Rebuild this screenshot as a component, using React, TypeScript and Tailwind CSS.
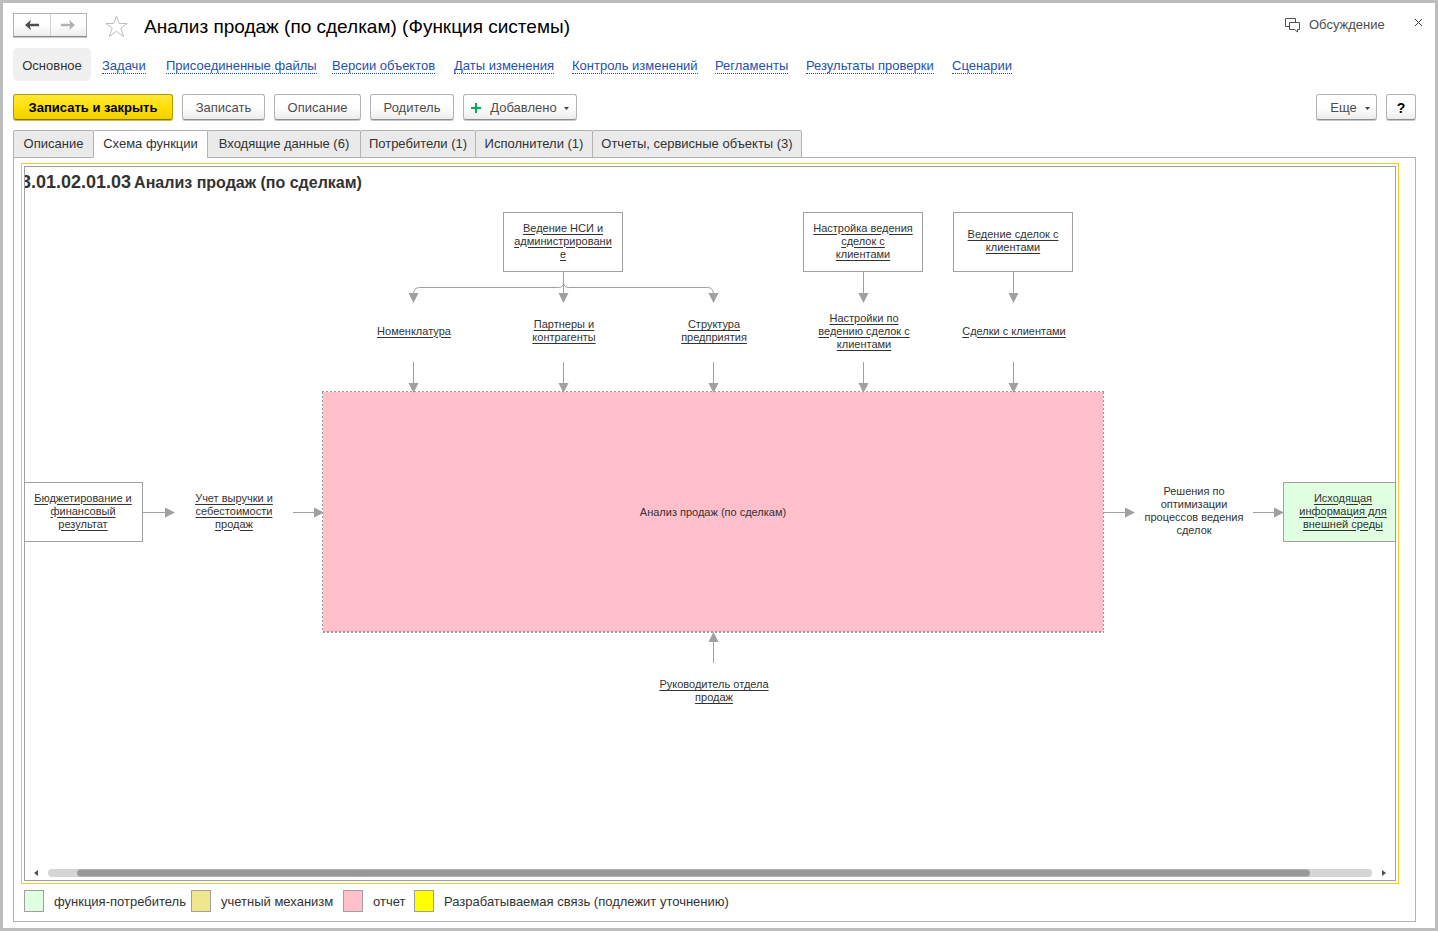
import type { ReactNode } from "react";

const links = [
  { label: "Задачи", width: "w-[44px]" },
  { label: "Присоединенные файлы", width: "w-[146px]" },
  { label: "Версии объектов", width: "w-[102px]" },
  { label: "Даты изменения", width: "w-[98px]" },
  { label: "Контроль изменений", width: "w-[123px]" },
  { label: "Регламенты", width: "w-[71px]" },
  { label: "Результаты проверки", width: "w-[126px]" },
  { label: "Сценарии", width: "w-[58px]" },
];

const tabs = [
  { label: "Описание", width: "w-[81px]" },
  { label: "Схема функции", width: "w-[115px]" },
  { label: "Входящие данные (6)", width: "w-[154px]" },
  { label: "Потребители (1)", width: "w-[116px]" },
  { label: "Исполнители (1)", width: "w-[118px]" },
  { label: "Отчеты, сервисные объекты (3)", width: "w-[210px]" },
];

const legend = [
  { label: "функция-потребитель", color: "bg-[#e0ffe0]", width: "w-[127px]" },
  { label: "учетный механизм", color: "bg-[#f0e68c]", width: "w-[112px]" },
  { label: "отчет", color: "bg-[#ffc0cb]", width: "w-[31px]" },
  { label: "Разрабатываемая связь (подлежит уточнению)", color: "bg-[#ffff00]", width: "w-[284px]" },
];

type DiagramNode = { lines: string[]; place: string; link?: boolean };

const box = "border border-[#a0a0a0] bg-white";

const nodes: DiagramNode[] = [
  { lines: ["Ведение НСИ и", "администрировани", "е"], place: `left-[478px] top-[45px] ${box}` },
  { lines: ["Настройка ведения", "сделок с", "клиентами"], place: `left-[778px] top-[45px] ${box}` },
  { lines: ["Ведение сделок с", "клиентами"], place: `left-[928px] top-[45px] ${box}` },
  { lines: ["Номенклатура"], place: "left-[329px] top-[135px]" },
  { lines: ["Партнеры и", "контрагенты"], place: "left-[479px] top-[135px]" },
  { lines: ["Структура", "предприятия"], place: "left-[629px] top-[135px]" },
  { lines: ["Настройки по", "ведению сделок с", "клиентами"], place: "left-[779px] top-[135px]" },
  { lines: ["Сделки с клиентами"], place: "left-[929px] top-[135px]" },
  { lines: ["Бюджетирование и", "финансовый", "результат"], place: `left-[-2px] top-[315px] ${box}` },
  { lines: ["Учет выручки и", "себестоимости", "продаж"], place: "left-[149px] top-[315px]" },
  { lines: ["Решения по", "оптимизации", "процессов ведения", "сделок"], place: "left-[1109px] top-[315px]", link: false },
  { lines: ["Исходящая", "информация для", "внешней среды"], place: "left-[1258px] top-[315px] border border-[#a0a0a0] bg-[#e0ffe0]" },
  { lines: ["Руководитель отдела", "продаж"], place: "left-[629px] top-[495px]" },
];

function Lines({ lines }: { lines: string[] }) {
  return (
    <>
      {lines.map((line) => (
        <span key={line} className="block whitespace-nowrap">
          {line}
        </span>
      ))}
    </>
  );
}

function Node({ lines, place, link = true }: DiagramNode) {
  const base = "absolute flex h-[60px] w-[120px] flex-col items-center justify-center pb-[2px] text-center";
  return link ? (
    <a href="#" className={`${base} underline underline-offset-2 ${place}`}>
      <Lines lines={lines} />
    </a>
  ) : (
    <div className={`${base} ${place}`}>
      <Lines lines={lines} />
    </div>
  );
}

function Connectors() {
  const inputs = [388.5, 538.5, 688.5, 838.5, 988.5];
  const down = (x: number, y: number) => `M${x - 5} ${y - 9}h10l-5 10z`;
  const right = (x: number, y: number) => `M${x - 9} ${y - 5}v10l10 -5z`;
  return (
    <svg className="absolute left-0 top-0 h-[600px] w-[1400px]" viewBox="0 0 1400 600" aria-hidden="true">
      <g fill="none" stroke="#999" strokeDasharray="2 2">
        <path d="M297 224.500H1079M297.500 225V464M1078.500 225V464" />
        <path d="M298 465H1079" strokeWidth="2" />
      </g>
      <g fill="none" stroke="#a0a0a0">
        <path d="M538.500 105V128M538.500 115Q538.500 120.500 533.500 120.500H394.500Q388.500 120.500 388.500 128M538.500 115Q538.500 120.500 543.500 120.500H682.500Q688.500 120.500 688.500 128" />
        <path d="M838.500 105V128M988.500 105V128" />
        {inputs.map((x) => (
          <path key={x} d={`M${x} 195V218`} />
        ))}
        <path d="M118 345.500H142M268 345.500H292M1079 345.500H1102M1228 345.500H1252M688.500 473V496" />
      </g>
      <g fill="#a0a0a0">
        {inputs.map((x) => (
          <path key={x} d={down(x, 135) + down(x, 225)} />
        ))}
        <path d={right(149, 345.5) + right(298, 345.5) + right(1109, 345.5) + right(1258, 345.5)} />
        <path d="M683.500 475h10l-5 -10z" />
      </g>
    </svg>
  );
}

function Button({ children, width, label }: { children: ReactNode; width: string; label?: string }) {
  return (
    <button
      type="button"
      aria-label={label}
      className={`flex h-[26px] shrink-0 items-center justify-center whitespace-nowrap rounded-[3px] border border-[#b3b3b3] border-b-[#8c8c8c] bg-linear-to-b from-white from-50% to-[#ececec] pt-[2px] text-[#4d4d4d] shadow-[0_1px_0_#c8c8c8] ${width}`}
    >
      {children}
    </button>
  );
}

function Caret() {
  return (
    <svg className="h-[3px] w-[5px]" viewBox="0 0 5 3" aria-hidden="true">
      <path d="M0 0h5L2.500 3z" fill="#404040" />
    </svg>
  );
}

function Arrow({ back }: { back?: boolean }) {
  return (
    <svg className="h-3 w-[14px]" viewBox="0 0 14 12" aria-hidden="true">
      <path
        d={back ? "M0 6L6 0.800L4.800 4.800H14V7.200H4.800L6 11.200z" : "M14 6L8 0.800L9.200 4.800H0V7.200H9.200L8 11.200z"}
        fill={back ? "#4d4d4d" : "#b0b0b0"}
      />
    </svg>
  );
}

export default function App() {
  return (
    <div className="flex min-h-screen flex-col overflow-hidden border-[3px] border-[#bdbdbd] bg-white pb-[6px] pl-[10px] pr-[19px] pt-[10px] font-['Liberation_Sans',Arial,sans-serif] text-[13px] leading-4 text-[#333]">
      <header className="flex h-[26px] items-start">
        <div className="flex h-6 w-[74px] shrink-0 border border-[#b3b3b3] border-b-[#8c8c8c] bg-linear-to-b from-white from-50% to-[#ececec] shadow-[0_1px_0_#c8c8c8]">
          <button type="button" aria-label="Назад" className="flex flex-1 items-center justify-center border-r border-[#d0d0d0]">
            <Arrow back />
          </button>
          <button type="button" aria-label="Вперед" className="flex flex-1 items-center justify-center">
            <Arrow />
          </button>
        </div>
        <button type="button" aria-label="В избранное" className="ml-[17px] mt-px shrink-0">
          <svg className="h-6 w-6" viewBox="0 0 24 24" aria-hidden="true">
            <path d="M12.500 2L15.200 9.500H23.200L16.800 14.200L19.700 22.500L12.500 17.300L5.300 22.500L8.200 14.200L1.800 9.500H9.800Z" fill="none" stroke="#b9c0c4" />
          </svg>
        </button>
        <h1 className="ml-4 whitespace-nowrap text-[19px] leading-7 text-black">Анализ продаж (по сделкам) (Функция системы)</h1>
        <button type="button" className="ml-auto mt-1 flex items-center gap-2 text-[#4d4d4d]">
          <svg className="h-4 w-4" viewBox="0 0 16 16" aria-hidden="true" fill="none" stroke="#505050">
            <path d="M4.500 9.500H.5V1.500H10.500V5M5.500 5.500H14.500V12.500H12.500V15L9.500 12.500H4.500V5.500H6" />
          </svg>
          <span className="w-[77px] whitespace-nowrap text-left">Обсуждение</span>
        </button>
        <button type="button" aria-label="Закрыть" className="-mr-[7px] ml-[28px] mt-[5px]">
          <svg className="h-[9px] w-[9px]" viewBox="0 0 9 9" aria-hidden="true">
            <path d="M1 1L8 8M8 1L1 8" stroke="#404040" />
          </svg>
        </button>
      </header>

      <nav className="mt-[9px] flex h-[33px] items-center gap-5 whitespace-nowrap">
        <span className="-mr-[9px] flex h-[33px] w-[78px] items-center justify-center rounded-[5px] bg-[#f0f0f0] pt-[2px]">Основное</span>
        {links.map(({ label, width }) => (
          <span key={label} className={`flex pt-[2px] ${width}`}>
            <a href="#" className="h-4 border-b border-dotted border-[#2450b0] leading-4 text-[#2450b0]">
              {label}
            </a>
          </span>
        ))}
      </nav>

      <div className="mt-[13px] flex h-[27px] gap-[9px]">
        <button
          type="button"
          className="h-[26px] w-[160px] whitespace-nowrap rounded-[3px] border border-[#b39b00] border-b-[#8c7a00] bg-linear-to-b from-[#ffe733] via-[#ffe000] to-[#f0d000] pt-[2px] font-bold text-black shadow-[0_1px_0_#c8b860]"
        >
          Записать и закрыть
        </button>
        <Button width="w-[83px]">Записать</Button>
        <Button width="w-[87px]">Описание</Button>
        <Button width="w-[84px]">Родитель</Button>
        <Button width="w-[114px]">
          <svg className="mr-[9px] h-[10px] w-[10px]" viewBox="0 0 10 10" aria-hidden="true">
            <path d="M5 0V10M0 5H10" stroke="#00b050" strokeWidth="2" />
          </svg>
          <span className="mr-[7px]">Добавлено</span>
          <Caret />
        </Button>
        <div className="ml-auto flex gap-[9px]">
          <Button width="w-[61px]">
            <span className="ml-[7px] mr-2">Еще</span>
            <Caret />
          </Button>
          <Button width="w-[30px]" label="Справка">
            <b className="text-[14px] text-black">?</b>
          </Button>
        </div>
      </div>

      <div role="tablist" className="relative z-10 mt-[9px] flex">
        {tabs.map(({ label, width }, i) => (
          <button
            key={label}
            type="button"
            role="tab"
            aria-selected={i === 1}
            className={`-mr-px h-7 whitespace-nowrap rounded-t-[2px] border border-[#b3b3b3] ${width} ${i === 1 ? "border-b-white bg-white" : "bg-[#eaeaea]"}`}
          >
            {label}
          </button>
        ))}
      </div>

      <main className="-mt-px flex flex-1 flex-col border border-[#b3b3b3] pb-[9px] pl-[7px] pr-4 pt-[5px]">
        <div className="flex flex-1 flex-col border border-[#f5cb2c] p-[2px]">
          <div className="flex flex-1 flex-col overflow-hidden border border-[#a0a0a0]">
            <section aria-label="Схема функции" className="relative min-h-[600px] flex-1 overflow-hidden text-[11px] leading-[13px]">
              <h2 className="absolute -left-1 top-1 flex items-baseline gap-[3px] whitespace-nowrap text-[16px] font-bold leading-[22px]">
                <span className="text-[18px]">3.01.02.01.03</span>
                <span>Анализ продаж (по сделкам)</span>
              </h2>
              <div className="absolute left-[298px] top-[225px] flex h-[240px] w-[780px] items-center justify-center bg-[#ffc0cb]">
                Анализ продаж (по сделкам)
              </div>
              {nodes.map((node) => (
                <Node key={node.lines.join(" ")} {...node} />
              ))}
              <Connectors />
            </section>
            <div className="flex h-[15px] items-center gap-[10px] px-[9px]">
              <svg className="h-[6px] w-[4px]" viewBox="0 0 4 6" aria-hidden="true">
                <path d="M4 0V6L0 3z" fill="#505050" />
              </svg>
              <div className="h-2 flex-1 rounded-full bg-[#d5d5d5] pl-[29px] pr-[62px]">
                <div className="h-2 rounded-full border-y border-[#b3b3b3] bg-[#999]" />
              </div>
              <svg className="h-[6px] w-[4px]" viewBox="0 0 4 6" aria-hidden="true">
                <path d="M0 0V6L4 3z" fill="#505050" />
              </svg>
            </div>
          </div>
        </div>
        <ul className="ml-[3px] mt-[6px] flex items-center gap-[10px]">
          {legend.map(({ label, color, width }) => (
            <li key={label} className="flex items-center gap-[10px]">
              <span className={`h-[22px] w-5 border border-[#a0a0a0] ${color}`} />
              <span className={`whitespace-nowrap pt-[2px] ${width}`}>{label}</span>
            </li>
          ))}
        </ul>
      </main>
    </div>
  );
}
